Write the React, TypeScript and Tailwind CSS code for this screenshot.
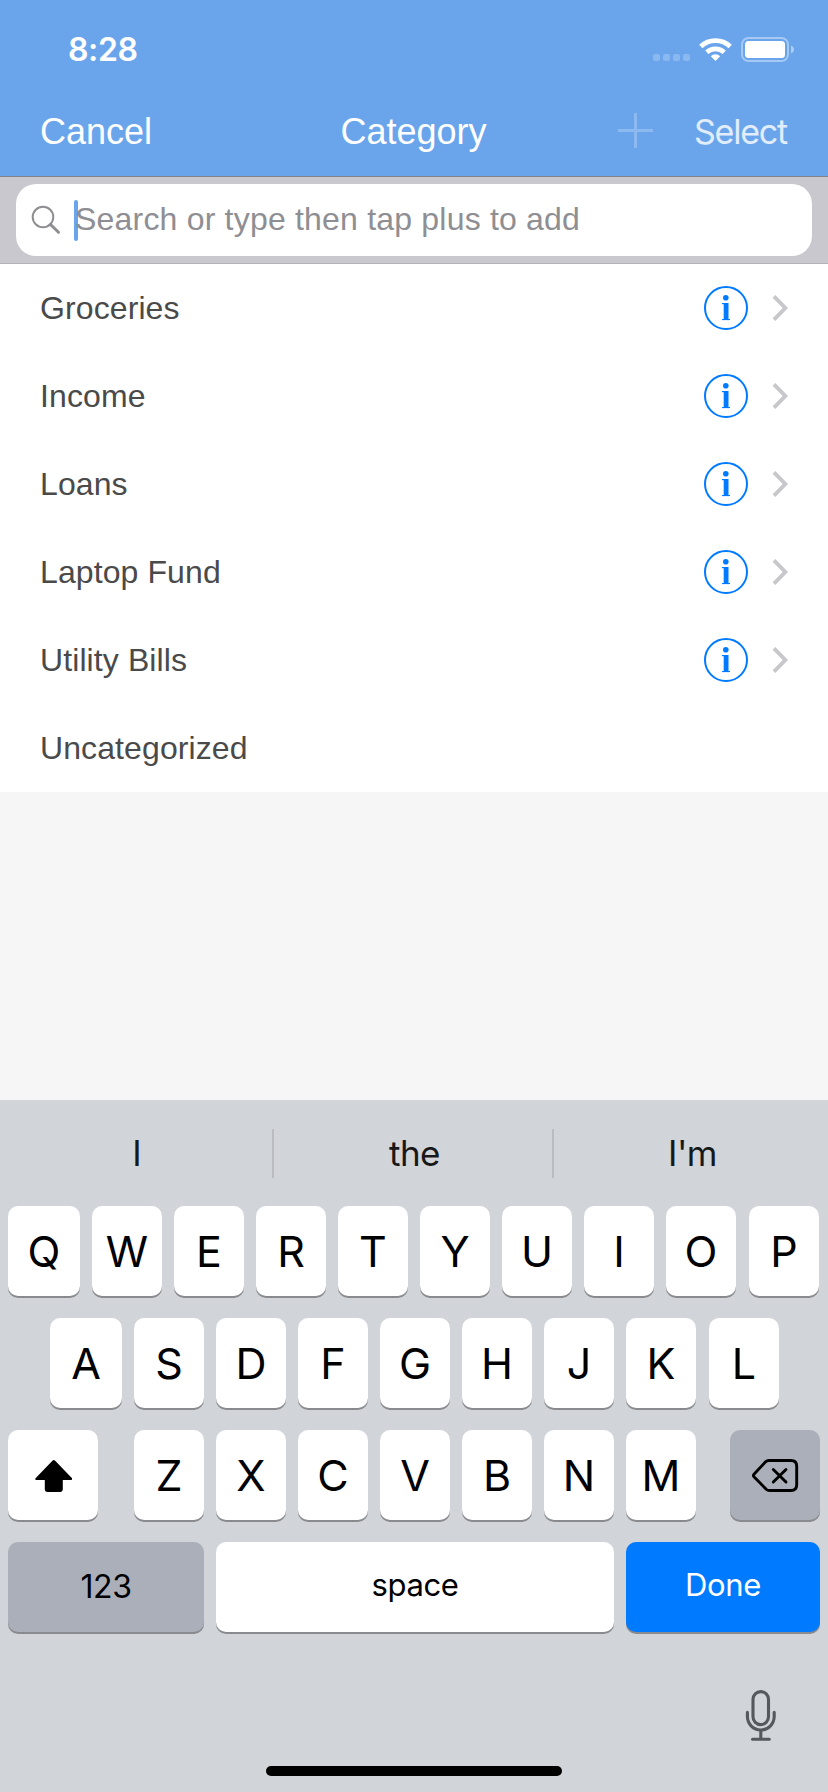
import type { ReactNode } from "react";

const categories = [
  { name: "Groceries", detail: true },
  { name: "Income", detail: true },
  { name: "Loans", detail: true },
  { name: "Laptop Fund", detail: true },
  { name: "Utility Bills", detail: true },
  { name: "Uncategorized", detail: false },
];

const StatusIcons = () => (
  <svg width="144" height="28" viewBox="652 36 144 28" fill="#fff">
    {[653, 663, 673, 683].map((x) => (
      <rect key={x} x={x} y="54" width="7" height="7" rx="2" opacity="0.22" />
    ))}
    <g fill="none" stroke="#fff">
      <path d="M700.8 46.400a21.500 21.500 0 0 1 29.400 0" strokeWidth="4.800" />
      <path d="M706.800 52.300a12.700 12.700 0 0 1 17.400 0" strokeWidth="4.600" />
    </g>
    <path d="M710.8 56.200a6.800 6.800 0 0 1 9.400 0L715.500 61z" />
    <rect x="742" y="38" width="46" height="23" rx="6.500" fill="none" stroke="#fff" strokeWidth="2" opacity="0.4" />
    <rect x="745" y="41" width="40" height="17" rx="3.500" />
    <path d="M791 45.500c4 1.500 4 6.500 0 8z" opacity="0.45" />
  </svg>
);

const InfoIcon = () => (
  <svg width="44" height="44" viewBox="0 0 44 44" fill="#007aff">
    <circle cx="22" cy="22" r="21" fill="none" stroke="#007aff" strokeWidth="2" />
    <circle cx="21.800" cy="11.700" r="2.800" />
    <rect x="19.700" y="17" width="4.800" height="17" />
    <rect x="18" y="17" width="3" height="1.200" />
    <rect x="18" y="33" width="8" height="1.100" />
  </svg>
);

const Chevron = () => (
  <svg width="17" height="28" viewBox="0 0 17 28" fill="none" stroke="#c7c7cc" strokeWidth="3.900">
    <path d="M2 2.400 13.300 14 2 25.600" />
  </svg>
);

const CategoryRow = ({ name, detail }: { name: string; detail: boolean }) => (
  <li className="flex h-22 items-center pr-[39px] pl-10">
    <span className="flex-1 text-[32px] leading-none tracking-[0.1px] text-[#4a4a4a]">{name}</span>
    {detail && (
      <div className="flex items-center gap-6">
        <InfoIcon />
        <Chevron />
      </div>
    )}
  </li>
);

const Key = ({ className, children }: { className: string; children: ReactNode }) => (
  <div className={`flex h-[90px] items-center justify-center rounded-[10px] shadow-[0_2px_0_#898a8d] ${className}`}>
    {children}
  </div>
);

const Letter = ({ char, wide }: { char: string; wide?: boolean }) => (
  <Key className={wide ? "w-18 bg-white" : "w-[70px] bg-white"}>
    <span className="text-[43px] leading-none">{char}</span>
  </Key>
);

const Keyboard = () => (
  <div className="flex h-[692px] flex-col bg-[#d1d4d9] font-['Inter',sans-serif] text-black">
    <div className="flex h-[106px] items-center text-[35px] leading-none text-[#181818]">
      <span className="w-[272px] pl-0.5 text-center">I</span>
      <span className="h-[49px] w-0.5 bg-[#bbbcc1]" />
      <span className="w-[278px] pl-[3px] text-center tracking-[-0.6px]">the</span>
      <span className="h-[49px] w-0.5 bg-[#bbbcc1]" />
      <span className="w-[274px] pl-[3px] text-center tracking-[-0.6px]">I'm</span>
    </div>

    <div className="flex flex-col gap-[22px]">
      <div className="flex gap-3 pl-2">
        {"QWERTYUIO".split("").map((c) => (
          <Letter key={c} char={c} wide={c === "Q"} />
        ))}
        <div className="pl-px">
          <Letter char="P" />
        </div>
      </div>
      <div className="flex gap-3 pl-[50px]">
        {"ASDFGHJK".split("").map((c) => (
          <Letter key={c} char={c} wide={c === "A"} />
        ))}
        <div className="pl-px">
          <Letter char="L" />
        </div>
      </div>
      <div className="flex justify-between px-2">
        <Key className="w-[90px] bg-white">
          <svg width="38" height="34" viewBox="-0.800 0 38 34" className="mt-1">
            <path
              d="M17.900 .6q1.100-1.100 2.200 0L36.800 17.700q2 2.300-.7 2.300H28v9.600q0 2.400-2.400 2.400H12.400Q10 32 10 29.600V20H1.900q-2.700 0-.7-2.300z"
            />
          </svg>
        </Key>
        <div className="flex gap-3 pl-[2px]">
          {"ZXCVBNM".split("").map((c) => (
            <Letter key={c} char={c} />
          ))}
        </div>
        <Key className="w-[90px] bg-[#abafb9]">
          <svg width="48" height="36" viewBox="0 0 48 36" fill="none" stroke="#000" strokeWidth="2.900" strokeLinecap="round" strokeLinejoin="round" className="mt-0.5">
            <path d="M17.800 2.500H40q5.700 0 5.700 5.700v18.600q0 5.700-5.700 5.700H18.400q-1.800 0-3.200-1.300L3.200 19.100q-1.500-1.600 0-3.200L14.600 3.800q1.400-1.300 3.200-1.300z" />
            <path d="m22.300 11.500 12.700 12.500M35 11.500 22.300 24" />
          </svg>
        </Key>
      </div>
      <div className="flex gap-3 px-2">
        <Key className="w-[196px] bg-[#abafb9]">
          <span className="text-[32px] leading-none tracking-[-0.4px]">123</span>
        </Key>
        <Key className="w-[398px] bg-white">
          <span className="pb-[5px] text-[31px] leading-none tracking-[-0.4px]">space</span>
        </Key>
        <Key className="w-[194px] bg-[#007aff] text-white">
          <span className="pb-[5px] text-[31px] leading-none tracking-[-0.3px]">Done</span>
        </Key>
      </div>
    </div>

    <div className="flex justify-end pt-[57px] pr-[51px]">
      <svg width="32" height="53" viewBox="0 0 32 53" fill="none" stroke="#55585d" strokeWidth="3.100" strokeLinecap="round">
        <rect x="8" y="2.600" width="15.500" height="33" rx="7.750" />
        <path d="M2.400 23.400v4.200a13.400 13.400 0 0 0 26.800 0v-4.200M15.800 41.500v8M7.500 50.300h16.800" />
      </svg>
    </div>
    <div className="mx-auto mt-6 h-2.5 w-[296px] rounded-full bg-black" />
  </div>
);

export default function App() {
  return (
    <div className="flex h-[1792px] w-[828px] flex-col overflow-hidden bg-[#f6f6f6] font-['Liberation_Sans',sans-serif]">
      <header className="h-44 bg-[#6aa5ec] text-white">
        <div className="flex h-22 items-center justify-between pt-3 pr-8 pl-[68px]">
          <span className="font-['Inter',sans-serif] text-[32px] leading-none font-semibold tracking-[-0.4px]">8:28</span>
          <StatusIcons />
        </div>
        <nav className="grid h-22 grid-cols-[1fr_auto_1fr] items-center pr-[41px] pl-10 text-[36px] leading-none">
          <span>Cancel</span>
          <span>Category</span>
          <div className="flex items-center justify-end gap-[38px]">
            <svg width="35" height="35" viewBox="0 0 35 35" stroke="#fff" strokeWidth="3" opacity="0.22" className="mb-[3px]">
              <path d="M17.500 0v35M0 17.500h35" />
            </svg>
            <span className="w-24 text-right font-['Inter',sans-serif] text-[34px] tracking-[-1.2px] text-white/80">Select</span>
          </div>
        </nav>
      </header>

      <div className="h-22 border-t border-b border-t-[#808285] border-b-[#b4b4b8] bg-[#c9c8ce] px-4 pt-[7px]">
        <div className="flex h-18 items-center rounded-[20px] bg-white pl-[15px]">
          <svg width="30" height="30" viewBox="0 0 30 30" fill="none" stroke="#8e8e93" strokeLinecap="round">
            <circle cx="12" cy="12" r="10.300" strokeWidth="2" />
            <path d="M19.500 19.500 27.500 27.300" strokeWidth="3" />
          </svg>
          <span className="ml-[13px] h-[41px] w-1 rounded-full bg-[#6aa5ec]" />
          <span className="-ml-[3px] pb-0.5 text-[32px] leading-none tracking-[0.2px] text-[#8e8e93]">Search or type then tap plus to add</span>
        </div>
      </div>

      <ul className="bg-white">
        {categories.map((c) => (
          <CategoryRow key={c.name} {...c} />
        ))}
      </ul>

      <div className="flex-1" />
      <Keyboard />
    </div>
  );
}
